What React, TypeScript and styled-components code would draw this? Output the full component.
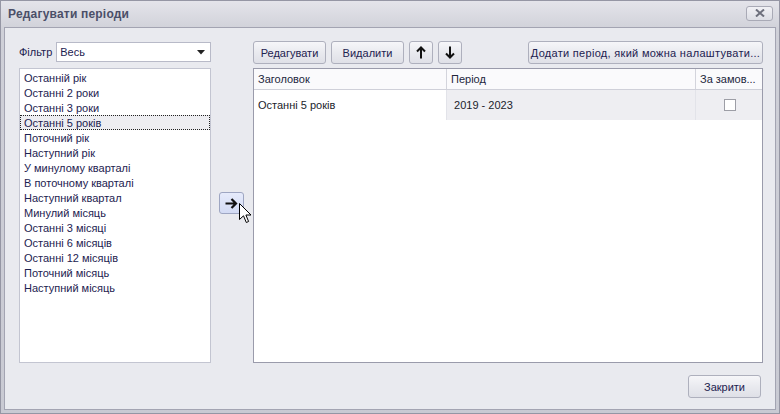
import * as React from "react";
import styled, { createGlobalStyle } from "styled-components";

const periods = [
  "Останній рік",
  "Останні 2 роки",
  "Останні 3 роки",
  "Останні 5 років",
  "Поточний рік",
  "Наступний рік",
  "У минулому кварталі",
  "В поточному кварталі",
  "Наступний квартал",
  "Минулий місяць",
  "Останні 3 місяці",
  "Останні 6 місяців",
  "Останні 12 місяців",
  "Поточний місяць",
  "Наступний місяць",
];

export default function App() {
  return (
    <>
      <Global />
      <Window>
        <TitleBar>
          <Title>Редагувати періоди</Title>
          <CloseButton>
            <svg width="10" height="8" viewBox="0 0 10 8">
              <path d="M1 0.5 L9 7.5 M9 0.5 L1 7.5" stroke="#6d6f7c" strokeWidth="2" />
            </svg>
          </CloseButton>
        </TitleBar>
        <Body>
          <MainRow>
            <LeftColumn>
              <FilterRow>
                <FilterLabel>Фільтр</FilterLabel>
                <Combo>
                  <span>Весь</span>
                  <svg width="8" height="5" viewBox="0 0 8 5">
                    <path d="M0 0 H8 L4 4.5 Z" fill="#222" />
                  </svg>
                </Combo>
              </FilterRow>
              <ListBox>
                {periods.map((p, i) => (
                  <ListItem key={p} $selected={i === 3}>
                    {p}
                  </ListItem>
                ))}
              </ListBox>
            </LeftColumn>

            <ArrowColumn>
              <MoveButton>
                <svg width="13" height="11" viewBox="0 0 13 11">
                  <path d="M0.5 5.5 H11 M6.5 1 L11 5.5 L6.5 10" stroke="#111" strokeWidth="2.2" fill="none" />
                </svg>
                <Cursor width="13" height="21" viewBox="0 0 13 21">
                  <path
                    d="M0.5 0.5 V16.5 L4.5 12.8 L7.3 19.5 L9.6 18.5 L6.9 12 H12 Z"
                    fill="#fff"
                    stroke="#000"
                    strokeWidth="1"
                    strokeLinejoin="round"
                  />
                </Cursor>
              </MoveButton>
            </ArrowColumn>

            <RightColumn>
              <Toolbar>
                <ToolButton $w={73}>Редагувати</ToolButton>
                <ToolButton $w={73}>Видалити</ToolButton>
                <ToolButton $w={24}>
                  <svg width="10" height="13" viewBox="0 0 10 13">
                    <path d="M5 12.5 V1.5 M1 5.5 L5 1.5 L9 5.5" stroke="#111" strokeWidth="2" fill="none" />
                  </svg>
                </ToolButton>
                <ToolButton $w={24}>
                  <svg width="10" height="13" viewBox="0 0 10 13">
                    <path d="M5 0.5 V11.5 M1 7.5 L5 11.5 L9 7.5" stroke="#111" strokeWidth="2" fill="none" />
                  </svg>
                </ToolButton>
                <Spacer />
                <ToolButton $w={235} $wide>
                  Додати період, який можна налаштувати...
                </ToolButton>
              </Toolbar>
              <Grid>
                <HeaderRow>
                  <HeaderCell $w={193}>Заголовок</HeaderCell>
                  <HeaderCell $w={249}>Період</HeaderCell>
                  <HeaderCell $w={0} $last>
                    За замов...
                  </HeaderCell>
                </HeaderRow>
                <DataRow>
                  <DataCell $w={193}>Останні 5 років</DataCell>
                  <DataCell $w={249} $shade>
                    &nbsp;2019 - 2023
                  </DataCell>
                  <DataCell $w={0} $shade $last $center>
                    <CheckBox />
                  </DataCell>
                </DataRow>
              </Grid>
            </RightColumn>
          </MainRow>
          <Footer>
            <ToolButton $w={73}>Закрити</ToolButton>
          </Footer>
        </Body>
      </Window>
    </>
  );
}

const Global = createGlobalStyle`
  body {
    margin: 0;
    background: #ffffff;
    font-family: "Liberation Sans", sans-serif;
  }
`;

const Window = styled.div`
  width: 780px;
  height: 414px;
  box-sizing: border-box;
  display: flex;
  flex-direction: column;
  border: 1px solid #9596a4;
  background: linear-gradient(#e4e4ea, #cfd0d8 30px, #c9cad3);
`;

const TitleBar = styled.div`
  height: 26px;
  display: flex;
  align-items: center;
  justify-content: space-between;
  padding: 0 6px 0 7px;
`;

const Title = styled.div`
  font-family: "Liberation Sans", sans-serif;
  font-weight: bold;
  font-size: 12px;
  letter-spacing: 0.2px;
  color: #4b4f68;
`;

const CloseButton = styled.div`
  width: 27px;
  height: 15px;
  box-sizing: border-box;
  border: 1px solid #a9aab6;
  border-radius: 3px;
  background: linear-gradient(#f1f1f5, #dcdde4);
  display: flex;
  align-items: center;
  justify-content: center;
  margin-top: -2px;
`;

const Body = styled.div`
  flex: 1;
  margin: 0 3px 3px 3px;
  border: 1px solid #a3a4b2;
  background: #e9eaef;
  display: flex;
  flex-direction: column;
  padding: 14px 12px 11px 14px;
`;

const MainRow = styled.div`
  display: flex;
  height: 321px;
`;

const LeftColumn = styled.div`
  width: 192px;
  display: flex;
  flex-direction: column;
  gap: 6px;
`;

const FilterRow = styled.div`
  height: 20px;
  display: flex;
  align-items: center;
  gap: 4px;
`;

const FilterLabel = styled.span`
  font-size: 11px;
  color: #1d2250;
`;

const Combo = styled.div`
  flex: 1;
  height: 20px;
  box-sizing: border-box;
  background: #fff;
  border: 1px solid #b8bac8;
  display: flex;
  align-items: center;
  justify-content: space-between;
  padding: 0 5px 0 3px;
  font-size: 11px;
  color: #1d2250;
`;

const ListBox = styled.div`
  flex: 1;
  background: #fff;
  border: 1px solid #c3c5d1;
  padding: 1px 0 0 0;
`;

const ListItem = styled.div<{ $selected?: boolean }>`
  height: 15px;
  box-sizing: border-box;
  line-height: 14px;
  padding-left: 3px;
  font-size: 11px;
  color: #1d2250;
  border: 1px dotted ${(p) => (p.$selected ? "#222" : "transparent")};
  background: ${(p) => (p.$selected ? "#ededf1" : "transparent")};
`;

const ArrowColumn = styled.div`
  width: 42px;
  display: flex;
  flex-direction: column;
  justify-content: center;
  align-items: center;
  padding-top: 1px;
`;

const MoveButton = styled.div`
  position: relative;
  width: 25px;
  height: 22px;
  box-sizing: border-box;
  border: 1px solid #9ea6c2;
  border-radius: 3px;
  background: linear-gradient(#e6ebfb, #d3dbf4);
  display: flex;
  align-items: center;
  justify-content: center;
  margin-right: 1px;
`;

const Cursor = styled.svg`
  position: absolute;
  left: 19px;
  top: 10px;
`;

const RightColumn = styled.div`
  flex: 1;
  display: flex;
  flex-direction: column;
  gap: 4px;
`;

const Toolbar = styled.div`
  height: 23px;
  display: flex;
  gap: 5px;
  margin-top: -1px;
`;

const Spacer = styled.div`
  flex: 1;
`;

const ToolButton = styled.div<{ $w: number; $wide?: boolean }>`
  width: ${(p) => p.$w}px;
  height: 23px;
  box-sizing: border-box;
  border: 1px solid #aeb0bd;
  border-radius: 3px;
  background: linear-gradient(#f6f6f9, #e9eaef 50%, #dfe0e7);
  display: flex;
  align-items: center;
  justify-content: center;
  font-size: 11px;
  letter-spacing: ${(p) => (p.$wide ? "0.3px" : "0")};
  color: #1d2250;
  white-space: nowrap;
`;

const Grid = styled.div`
  flex: 1;
  background: #fff;
  border: 1px solid #9a9bab;
  display: flex;
  flex-direction: column;
`;

const HeaderRow = styled.div`
  height: 20px;
  display: flex;
  border-bottom: 1px solid #cfd0d9;
  background: #fafafc;
`;

const HeaderCell = styled.div<{ $w: number; $last?: boolean }>`
  ${(p) => (p.$last ? "flex: 1;" : `width: ${p.$w}px;`)}
  box-sizing: border-box;
  border-right: ${(p) => (p.$last ? "none" : "1px solid #d3d4dc")};
  display: flex;
  align-items: center;
  padding-left: 4px;
  font-size: 11px;
  color: #22263c;
  white-space: nowrap;
  overflow: hidden;
`;

const DataRow = styled.div`
  height: 30px;
  display: flex;
`;

const DataCell = styled.div<{ $w: number; $shade?: boolean; $last?: boolean; $center?: boolean }>`
  ${(p) => (p.$last ? "flex: 1;" : `width: ${p.$w}px;`)}
  box-sizing: border-box;
  border-right: ${(p) => (p.$last ? "none" : "1px solid #e2e3e9")};
  background: ${(p) => (p.$shade ? "#eeeef2" : "#fff")};
  display: flex;
  align-items: center;
  justify-content: ${(p) => (p.$center ? "center" : "flex-start")};
  padding-left: ${(p) => (p.$center ? "0" : "4px")};
  font-size: 11px;
  color: #1b1d2c;
`;

const CheckBox = styled.div`
  width: 12px;
  height: 12px;
  box-sizing: border-box;
  border: 1px solid #9d9ea6;
  background: #fff;
  margin-left: 1px;
`;

const Footer = styled.div`
  flex: 1;
  display: flex;
  justify-content: flex-end;
  align-items: flex-end;
  padding-right: 2px;
`;
